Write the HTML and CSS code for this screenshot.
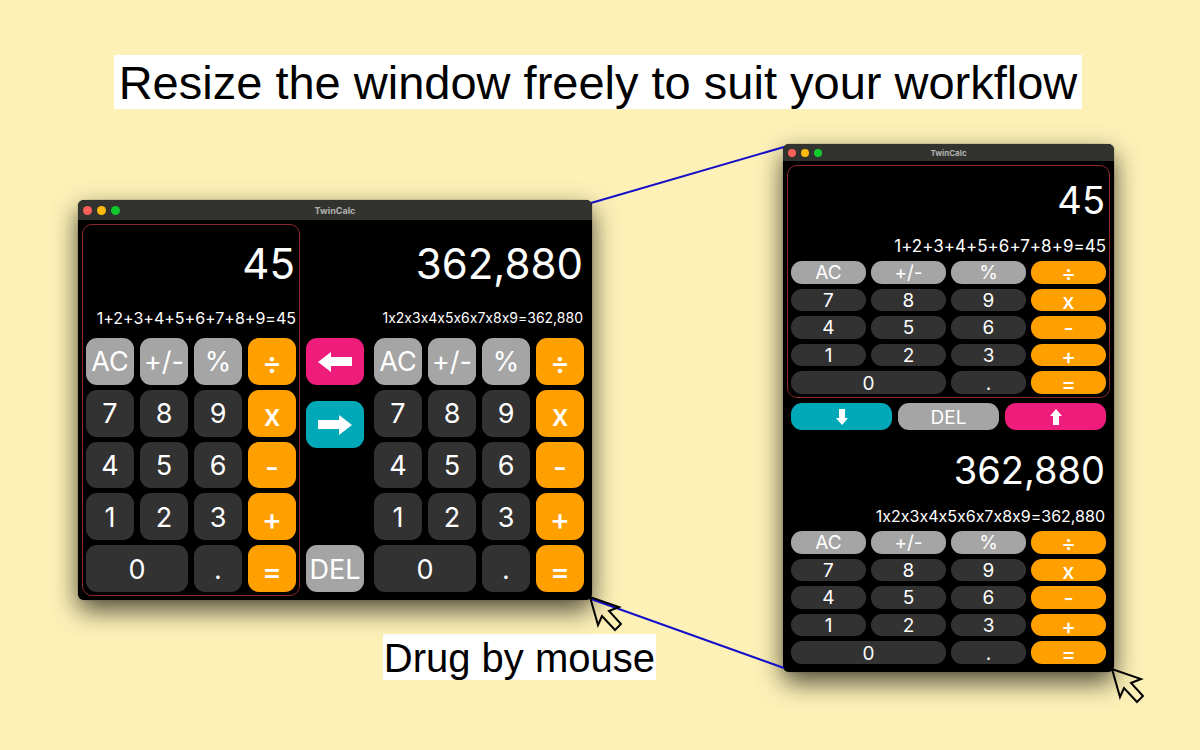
FILE: index.html
```html
<!DOCTYPE html>
<html lang="en">
<head>
    <meta charset="UTF-8">
    <meta name="viewport" content="width=device-width, initial-scale=1.0">
    <title>TwinCalc</title>
    <link rel="stylesheet" href="styles.css">
</head>
<body>
    <h1><span>Resize the window freely to suit your workflow</span></h1>
    <main class="stage">
        <figure class="scene wide">
            <div class="window">
                <div class="titlebar">
                    <div class="dots">
                        <span class="dot red"></span>
                        <span class="dot yellow"></span>
                        <span class="dot green"></span>
                    </div>
                    <p>TwinCalc</p>
                </div>
                <div class="content">
                    <section class="calc active">
                        <output class="result">45</output>
                        <output class="history">1+2+3+4+5+6+7+8+9=45</output>
                        <div class="keys">
                            <button class="gray">AC</button>
                            <button class="gray">+/-</button>
                            <button class="gray">%</button>
                            <button class="op">÷</button>
                            <button>7</button>
                            <button>8</button>
                            <button>9</button>
                            <button class="op">x</button>
                            <button>4</button>
                            <button>5</button>
                            <button>6</button>
                            <button class="op">-</button>
                            <button>1</button>
                            <button>2</button>
                            <button>3</button>
                            <button class="op">+</button>
                            <button class="zero">0</button>
                            <button>.</button>
                            <button class="op">=</button>
                        </div>
                    </section>
                    <div class="middle">
                        <button class="pink" aria-label="Copy left">
                            <svg width="34" height="20" viewBox="0 0 34 20"><path d="M0 10 13 0v5h21v9H13v6z"/></svg>
                        </button>
                        <button class="teal" aria-label="Copy right">
                            <svg width="34" height="20" viewBox="0 0 34 20"><path d="M34 10 21 0v5H0v9h21v6z"/></svg>
                        </button>
                        <button class="gray del">DEL</button>
                    </div>
                    <section class="calc">
                        <output class="result">362,880</output>
                        <output class="history long">1x2x3x4x5x6x7x8x9=362,880</output>
                        <div class="keys">
                            <button class="gray">AC</button>
                            <button class="gray">+/-</button>
                            <button class="gray">%</button>
                            <button class="op">÷</button>
                            <button>7</button>
                            <button>8</button>
                            <button>9</button>
                            <button class="op">x</button>
                            <button>4</button>
                            <button>5</button>
                            <button>6</button>
                            <button class="op">-</button>
                            <button>1</button>
                            <button>2</button>
                            <button>3</button>
                            <button class="op">+</button>
                            <button class="zero">0</button>
                            <button>.</button>
                            <button class="op">=</button>
                        </div>
                    </section>
                </div>
                <svg class="cursor" width="36" height="38" viewBox="-2 -2 36 38"><path d="M0 0 8 28 12 19 25 33 31 27 19 14 29 10z"/></svg>
            </div>
            <figcaption>Drug by mouse</figcaption>
        </figure>

        <svg class="guides" viewBox="0 0 191 528" preserveAspectRatio="none">
            <path d="M-1 59 192 3M-1 455 192 524"/>
        </svg>

        <figure class="scene tall">
            <div class="window">
                <div class="titlebar">
                    <div class="dots">
                        <span class="dot red"></span>
                        <span class="dot yellow"></span>
                        <span class="dot green"></span>
                    </div>
                    <p>TwinCalc</p>
                </div>
                <div class="content">
                    <section class="calc active">
                        <output class="result">45</output>
                        <output class="history">1+2+3+4+5+6+7+8+9=45</output>
                        <div class="keys">
                            <button class="gray">AC</button>
                            <button class="gray">+/-</button>
                            <button class="gray">%</button>
                            <button class="op">÷</button>
                            <button>7</button>
                            <button>8</button>
                            <button>9</button>
                            <button class="op">x</button>
                            <button>4</button>
                            <button>5</button>
                            <button>6</button>
                            <button class="op">-</button>
                            <button>1</button>
                            <button>2</button>
                            <button>3</button>
                            <button class="op">+</button>
                            <button class="zero">0</button>
                            <button>.</button>
                            <button class="op">=</button>
                        </div>
                    </section>
                    <div class="middle">
                        <button class="teal" aria-label="Copy down">
                            <svg width="12" height="16" viewBox="0 0 12 16"><path d="M6 16 0 9h3V0h6v9h3z"/></svg>
                        </button>
                        <button class="gray">DEL</button>
                        <button class="pink" aria-label="Copy up">
                            <svg width="12" height="16" viewBox="0 0 12 16"><path d="M6 0 0 7h3v9h6V7h3z"/></svg>
                        </button>
                    </div>
                    <section class="calc">
                        <output class="result">362,880</output>
                        <output class="history long">1x2x3x4x5x6x7x8x9=362,880</output>
                        <div class="keys">
                            <button class="gray">AC</button>
                            <button class="gray">+/-</button>
                            <button class="gray">%</button>
                            <button class="op">÷</button>
                            <button>7</button>
                            <button>8</button>
                            <button>9</button>
                            <button class="op">x</button>
                            <button>4</button>
                            <button>5</button>
                            <button>6</button>
                            <button class="op">-</button>
                            <button>1</button>
                            <button>2</button>
                            <button>3</button>
                            <button class="op">+</button>
                            <button class="zero">0</button>
                            <button>.</button>
                            <button class="op">=</button>
                        </div>
                    </section>
                </div>
                <svg class="cursor" width="36" height="38" viewBox="-2 -2 36 38"><path d="M0 0 8 28 12 19 25 33 31 27 19 14 29 10z"/></svg>
            </div>
        </figure>
    </main>
</body>
</html>
```
FILE: styles.css
```css
* {
    box-sizing: border-box;
}
body {
    margin: 0;
    min-height: 100vh;
    padding-top: 55px;
    background-color: #fef1b8;
    font-family: "Liberation Sans", Arial, sans-serif;
    color: black;
}
h1 {
    margin: 0 4px 35px 0;
    font-size: 47px;
    font-weight: normal;
    line-height: 52px;
    text-align: center;
}
h1 span {
    display: inline-block;
    padding: 2px 5px 0;
    background-color: white;
}
.stage {
    display: grid;
    grid-template-columns: minmax(0, 514fr) minmax(0, 191fr) minmax(0, 331fr);
    align-items: start;
    padding: 0 86px 0 78px;
}
.scene {
    display: flex;
    flex-direction: column;
    margin: 0;
}
.wide {
    padding-top: 56px;
}
figcaption {
    align-self: flex-end;
    margin: 34px -64px 0 0;
    padding: 2px 1px 0;
    font-size: 40px;
    line-height: 44px;
    background-color: white;
}

/* lines joining the corners of both windows */
.guides {
    width: 100%;
    height: 528px;
    overflow: visible;
    z-index: 1;
}
.guides path {
    fill: none;
    stroke: #1410c8;
    stroke-width: 2;
}

.window {
    position: relative;
    background-color: black;
    border-radius: 6px;
    box-shadow: 0 0 1px rgba(0, 0, 0, 0.6), 0 10px 26px rgba(0, 0, 0, 0.7);
    font-family: Inter, "Noto Sans", sans-serif;
    font-variant-ligatures: no-contextual;
    color: white;
}
.cursor {
    position: absolute;
    right: -32px;
    bottom: -33px;
    z-index: 2;
}
.cursor path {
    fill: none;
    stroke: black;
    stroke-width: 2;
}

.titlebar {
    display: grid;
    grid-template-columns: 1fr auto 1fr;
    align-items: center;
    height: 20px;
    padding: 0 5px;
    border-radius: 6px 6px 0 0;
    background-color: #32322f;
}
.titlebar p {
    margin: 0;
    font-size: 9px;
    font-weight: bold;
    color: #b2b2af;
}
.dots {
    display: flex;
    gap: 5px;
}
.dot {
    width: 9px;
    height: 9px;
    border-radius: 50%;
}
.red {
    background-color: #fb5f57;
}
.yellow {
    background-color: #fdbc0b;
}
.green {
    background-color: #10c82c;
}

.content {
    display: grid;
    grid-template-columns: minmax(0, 218fr) minmax(0, 58fr) minmax(0, 218fr);
    gap: 6px;
    padding: 4px;
}
.calc {
    display: flex;
    flex-direction: column;
    padding: 3px;
    border: 1px solid transparent;
    border-radius: 10px;
}
.active {
    border-color: #8c2a2b;
}
.result,
.history {
    text-align: right;
    white-space: nowrap;
}
.result {
    height: 80px;
    padding-right: 1px;
    font-size: 42px;
    line-height: 72px;
}
.history {
    height: 30px;
    font-size: 16px;
    line-height: 20px;
}
.long {
    padding-right: 1px;
    font-size: 14px;
}
.keys {
    display: grid;
    grid-template-columns: repeat(4, minmax(0, 1fr));
    grid-template-rows: repeat(5, minmax(0, 1fr));
    gap: 5px 6px;
    height: 254px;
}
button {
    display: flex;
    align-items: center;
    justify-content: center;
    min-width: 0;
    min-height: 0;
    padding: 2px 0 0;
    border: none;
    border-radius: 11px;
    background-color: #323232;
    color: white;
    font-family: inherit;
    font-size: 27px;
    line-height: 30px;
    font-variant-ligatures: inherit;
    cursor: pointer;
}
.zero {
    grid-column: span 2;
}
.gray {
    background-color: #a5a5a5;
}
.op {
    padding-top: 4px;
    background-color: #ff9f00;
    font-size: 30px;
    font-weight: 500;
}
.pink {
    padding: 0;
    background-color: #ee1d7b;
}
.teal {
    padding: 0;
    background-color: #00a9b8;
}
.middle {
    display: flex;
    flex-direction: column;
    gap: 16px;
    padding: 114px 0 4px;
}
.middle button {
    height: 47px;
}
.middle svg {
    fill: white;
}
.middle .del {
    margin-top: auto;
}

/* narrow window, calculators stacked */
.tall .titlebar {
    height: 17px;
}
.tall .titlebar p {
    font-size: 8px;
}
.tall .dot {
    width: 8px;
    height: 8px;
}
.tall .content {
    grid-template-columns: minmax(0, 1fr);
    gap: 5px;
}
.tall .result {
    height: 67px;
    font-size: 38px;
    line-height: 63px;
}
.tall .history {
    height: 25px;
    font-size: 17px;
    line-height: 20px;
}
.tall .long {
    font-size: 16px;
}
.tall .keys {
    gap: 5px;
    height: 133px;
}
.tall button {
    font-size: 19px;
    line-height: 20px;
}
.tall .op {
    padding-top: 2px;
    font-size: 22px;
}
.tall .middle {
    display: grid;
    grid-template-columns: repeat(3, minmax(0, 1fr));
    gap: 6px;
    padding: 0 4px;
}
.tall .middle button {
    height: 27px;
}
```
